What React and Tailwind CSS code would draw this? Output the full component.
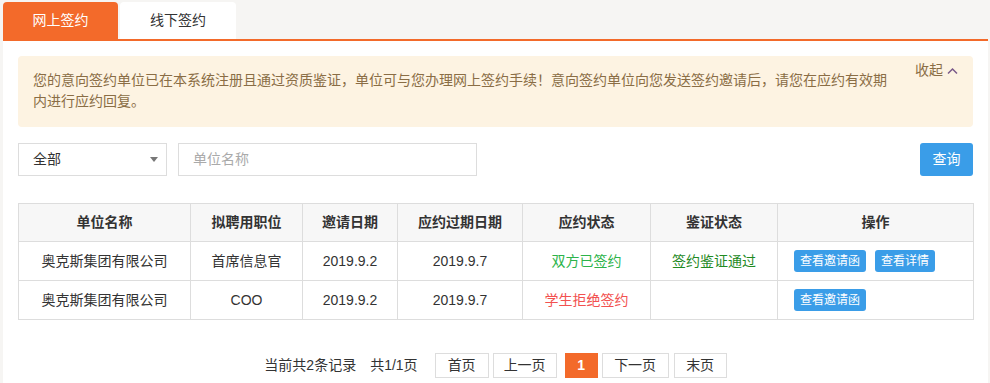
import React from "react";

export default function App() {
  const font = { fontFamily: '"Liberation Sans", "Noto Sans CJK SC", sans-serif' };
  const cols = [172, 112, 95, 125, 128, 127, 196];
  const headers = ["单位名称", "拟聘用职位", "邀请日期", "应约过期日期", "应约状态", "鉴证状态", "操作"];
  return (
    <div className="w-[990px] h-[383px] bg-[#f6f5f3] pl-[3px] pr-[2px] overflow-hidden text-[#333]" style={font}>
      <div className="flex gap-[2px] pt-[2px] h-[39px]">
        <div className="w-[115px] rounded-t-[4px] bg-[#f36a2a] text-white text-[14px] flex items-center justify-center">网上签约</div>
        <div className="w-[116px] rounded-t-[4px] bg-white text-[#333] text-[14px] flex items-center justify-center">线下签约</div>
      </div>
      <div className="h-[2px] bg-[#f36a2a]"></div>
      <div className="bg-white h-[400px] px-[15px] pt-[15px]">
        <div className="flex rounded-[4px] bg-[#fdf3e2] pl-[15px] pt-[14px] pb-[15px]">
          <p className="w-[862px] text-[14px] leading-[21px] text-[#8a6d45]">
            您的意向签约单位已在本系统注册且通过资质鉴证，单位可与您办理网上签约手续！意向签约单位向您发送签约邀请后，请您在应约有效期内进行应约回复。
          </p>
          <div className="ml-[20px] -mt-[10px] flex items-center gap-[4px] text-[14px] leading-[21px] text-[#8a6d45] self-start">
            <span>收起</span>
            <svg width="11" height="8" viewBox="0 0 11 8" fill="none">
              <path d="M1 6.5 L5.5 2 L10 6.5" stroke="#7a5a8a" strokeWidth="1.5" />
            </svg>
          </div>
        </div>

        <div className="flex items-center mt-[16px] h-[33px]">
          <div className="w-[149px] h-[33px] border border-[#ddd] flex items-center justify-between pl-[14px] pr-[8px] text-[14px] text-[#333]">
            <span>全部</span>
            <svg width="8" height="6" viewBox="0 0 8 6"><path d="M0 0 H8 L4 5 Z" fill="#777" /></svg>
          </div>
          <div className="ml-[11px] w-[299px] h-[33px] border border-[#ddd] flex items-center pl-[14px] text-[14px] text-[#aaa]">单位名称</div>
          <button className="ml-auto w-[53px] h-[33px] rounded-[3px] bg-[#3a9de8] text-white text-[14px] flex items-center justify-center">查询</button>
        </div>

        <table className="mt-[27px] w-[955px] border-collapse text-[14px] table-fixed">
          <colgroup>
            {cols.map((w, i) => <col key={i} style={{ width: w }} />)}
          </colgroup>
          <thead>
            <tr className="h-[38px] bg-[#f7f7f7]">
              {headers.map((h) => (
                <th key={h} className="border border-[#ddd] font-bold text-[#333] text-center">{h}</th>
              ))}
            </tr>
          </thead>
          <tbody>
            <tr className="h-[39px]">
              <td className="border border-[#ddd] text-center">奥克斯集团有限公司</td>
              <td className="border border-[#ddd] text-center">首席信息官</td>
              <td className="border border-[#ddd] text-center">2019.9.2</td>
              <td className="border border-[#ddd] text-center">2019.9.7</td>
              <td className="border border-[#ddd] text-center text-[#2cb34a]">双方已签约</td>
              <td className="border border-[#ddd] text-center text-[#1f8a1f]">签约鉴证通过</td>
              <td className="border border-[#ddd]">
                <div className="flex pl-[16px] gap-[9px]">
                  <span className="h-[22px] px-[6px] rounded-[3px] bg-[#3a9de8] text-white text-[12px] flex items-center">查看邀请函</span>
                  <span className="h-[22px] px-[6px] rounded-[3px] bg-[#3a9de8] text-white text-[12px] flex items-center">查看详情</span>
                </div>
              </td>
            </tr>
            <tr className="h-[39px]">
              <td className="border border-[#ddd] text-center">奥克斯集团有限公司</td>
              <td className="border border-[#ddd] text-center">COO</td>
              <td className="border border-[#ddd] text-center">2019.9.2</td>
              <td className="border border-[#ddd] text-center">2019.9.7</td>
              <td className="border border-[#ddd] text-center text-[#f2514f]">学生拒绝签约</td>
              <td className="border border-[#ddd] text-center"></td>
              <td className="border border-[#ddd]">
                <div className="flex pl-[16px]">
                  <span className="h-[22px] px-[6px] rounded-[3px] bg-[#3a9de8] text-white text-[12px] flex items-center">查看邀请函</span>
                </div>
              </td>
            </tr>
          </tbody>
        </table>

        <div className="mt-[33px] flex items-center justify-center text-[14px] text-[#333]">
          <span>当前共2条记录</span>
          <span className="ml-[14px]">共1/1页</span>
          <div className="ml-[17px] flex items-center gap-[4px]">
            <span className="h-[25px] w-[54px] border border-[#ddd] flex items-center justify-center">首页</span>
            <span className="h-[25px] w-[64px] border border-[#ddd] flex items-center justify-center">上一页</span>
            <span className="ml-[4px] h-[25px] w-[33px] bg-[#f36a2a] text-white font-bold flex items-center justify-center">1</span>
            <span className="h-[25px] w-[67px] border border-[#ddd] flex items-center justify-center">下一页</span>
            <span className="ml-[1px] h-[25px] w-[53px] border border-[#ddd] flex items-center justify-center">末页</span>
          </div>
        </div>
      </div>
    </div>
  );
}
